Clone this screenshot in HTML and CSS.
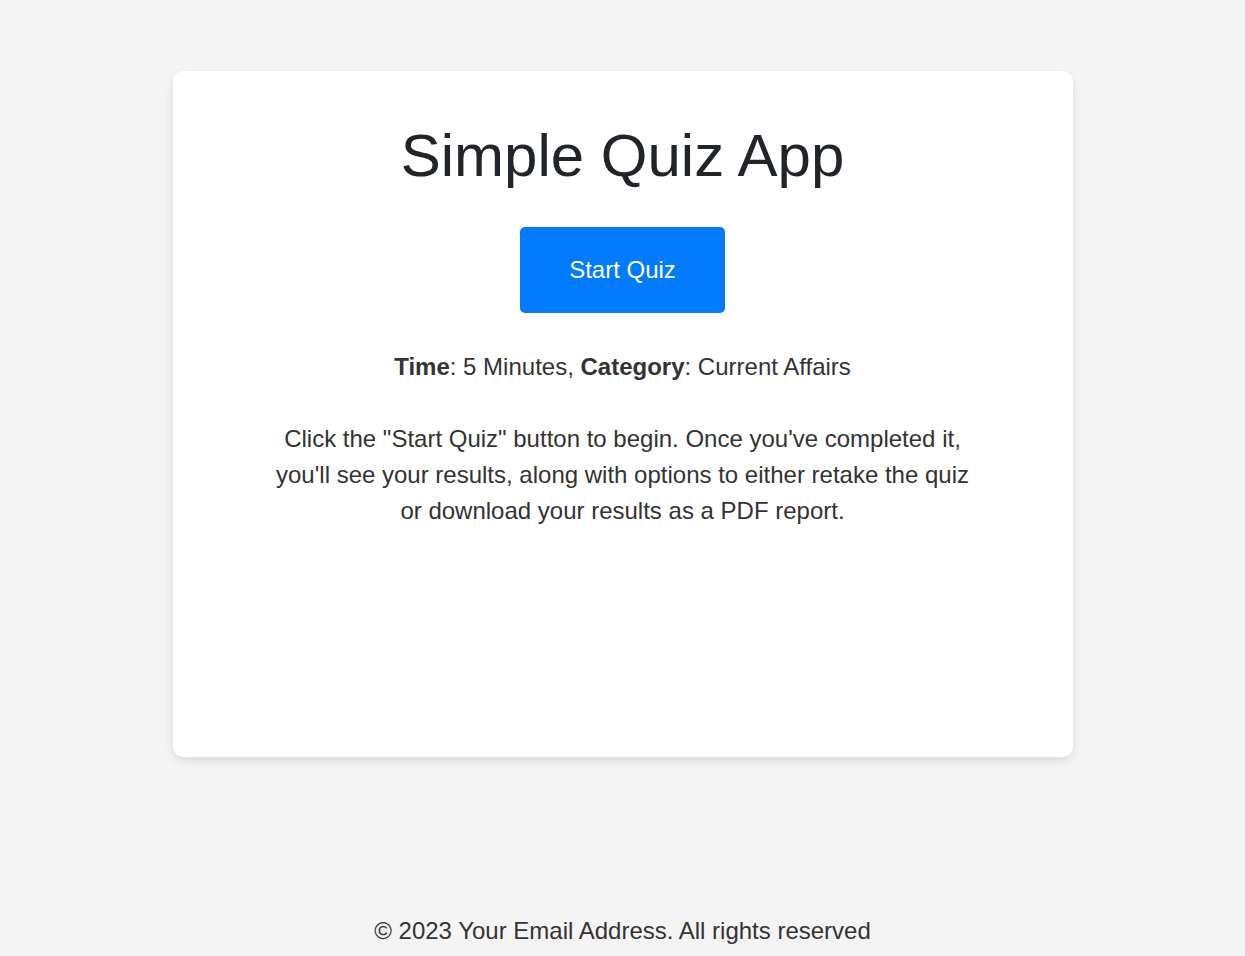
FILE: index.html
```html
<!DOCTYPE html>
<html lang="en">
<head>
<meta charset="utf-8">
<title>Simple Quiz App</title>
<link rel="stylesheet" href="styles.css">
</head>
<body>
<main class="card">
  <h1 class="title">Simple Quiz App</h1>
  <button class="start-btn" type="button">Start Quiz</button>
  <p class="info"><strong>Time</strong>: 5 Minutes, <strong>Category</strong>: Current Affairs</p>
  <p class="desc">Click the "Start Quiz" button to begin. Once you've completed it, you'll see your results, along with options to either retake the quiz or download your results as a PDF report.</p>
</main>
<footer class="footer">© 2023 Your Email Address. All rights reserved</footer>
</body>
</html>
```

FILE: styles.css
```css
html, body {
  margin: 0;
  padding: 0;
}
body {
  background: #f4f4f4;
  font-family: "Liberation Sans", Arial, sans-serif;
  color: #333;
  font-size: 24px;
  line-height: 36px;
}
.card {
  box-sizing: border-box;
  width: 900px;
  min-height: 686px;
  margin: 71px auto 0;
  background: #fff;
  border-radius: 10px;
  box-shadow: 0 4px 10px rgba(0, 0, 0, 0.1);
  padding: 50px 100px;
  display: flex;
  flex-direction: column;
  align-items: center;
  text-align: center;
}
.title {
  margin: 0;
  font-size: 60px;
  font-weight: 400;
  line-height: 69px;
  color: #212529;
}
.start-btn {
  margin-top: 37px;
  width: 205px;
  height: 86px;
  border: 0;
  border-radius: 5px;
  background: #007bff;
  color: #fff;
  font-family: inherit;
  font-size: 24px;
  cursor: pointer;
}
.info {
  margin: 36px 0 0;
}
.info strong {
  font-weight: 700;
}
.desc {
  margin: 36px 0 0;
}
.footer {
  margin-top: 156px;
  text-align: center;
}
```
